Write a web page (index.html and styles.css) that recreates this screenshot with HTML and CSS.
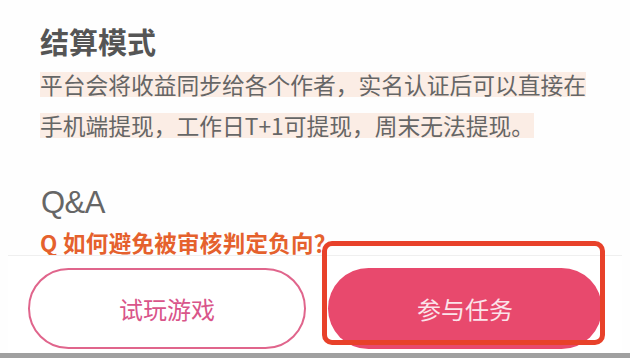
FILE: index.html
```html
<!DOCTYPE html>
<html lang="zh-CN">
<head>
<meta charset="utf-8">
<title>结算模式</title>
<link rel="stylesheet" href="styles.css">
</head>
<body>
<div class="page">
  <main class="content">
    <h2 class="title">结算模式</h2>
    <p class="desc"><span class="mark">平台会将收益同步给各个作者，实名认证后可以直接在手机端提现，工作日T+1可提现，周末无法提现。</span></p>
    <h2 class="qa-title">Q&amp;A</h2>
    <p class="question">Q 如何避免被审核判定负向？</p>
  </main>
  <footer class="bar">
    <div class="actions">
      <button class="btn btn-outline">试玩游戏</button>
      <button class="btn btn-fill">参与任务</button>
    </div>
    <div class="sysbar"></div>
  </footer>
  <div class="annot"></div>
</div>
</body>
</html>
```

FILE: styles.css
```css
* { box-sizing: border-box; }
html, body {
  margin: 0;
  padding: 0;
  background: #fefefe;
}
.page {
  position: relative;
  width: 630px;
  height: 358px;
  overflow: hidden;
  display: flex;
  flex-direction: column;
  font-family: "Noto Sans CJK SC", "Noto Sans", sans-serif;
}
.content {
  flex: 1;
  padding: 27px 40px 0 40px;
  min-height: 0;
}
.title {
  margin: 0;
  font-size: 29px;
  line-height: 29px;
  font-weight: 700;
  color: #555;
}
.desc {
  margin: 8px 0 0 0;
  width: 560px;
  font-size: 22.75px;
  line-height: 41px;
  color: #666;
}
.mark {
  background-image: linear-gradient(to bottom, transparent 4px, #fbede5 4px, #fbede5 29px, transparent 29px);
}
.qa-title {
  margin: 41px 0 0 1px;
  font-family: "Liberation Sans", Arial, sans-serif;
  font-weight: 400;
  font-size: 31px;
  line-height: 31px;
  color: #666;
  letter-spacing: -0.5px;
}
.question {
  margin: 13px 0 0 0;
  font-size: 22.5px;
  line-height: 22px;
  font-weight: 700;
  color: #e5612d;
  letter-spacing: 0.3px;
}
.bar {
  position: relative;
  flex: none;
  background: #fff;
  border-top: 1px solid #efefef;
  margin: 0 8px;
}
.actions {
  display: flex;
  gap: 22px;
  padding: 12px 20px 4px 20px;
}
.btn {
  flex: 1;
  height: 81px;
  border-radius: 41px;
  font-family: "Noto Sans CJK SC", sans-serif;
  font-size: 24px;
  font-weight: 400;
}
.btn-outline {
  background: #fff;
  border: 2px solid #e0658c;
  color: #d9558a;
}
.btn-fill {
  background: #e8496d;
  border: none;
  color: #fbe4ea;
}
.sysbar {
  height: 5px;
  margin: 0 -8px;
  background: #a0a0a0;
}
.annot {
  position: absolute;
  left: 322px;
  top: 241px;
  width: 283px;
  height: 104px;
  border: 5px solid #e8412a;
  border-radius: 10px;
}
```
